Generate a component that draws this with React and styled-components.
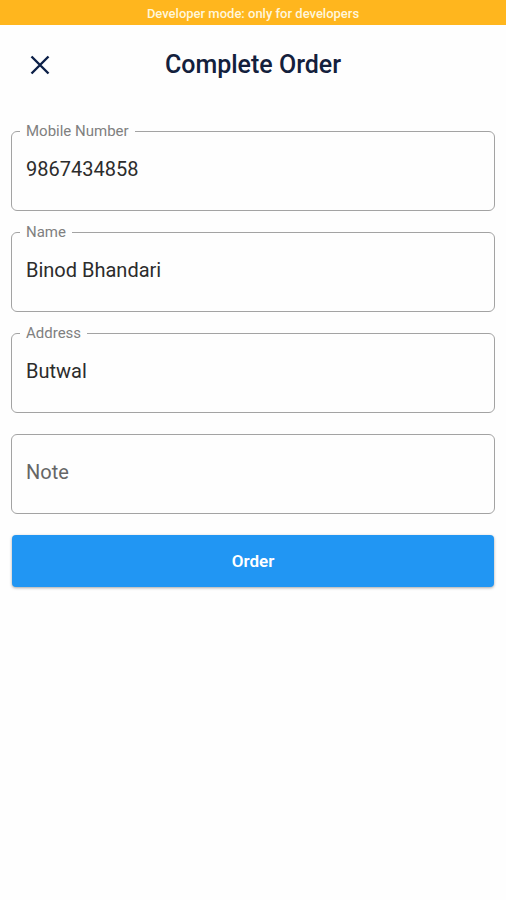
import React, { useState } from "react";
import styled, { createGlobalStyle } from "styled-components";

const GlobalStyle = createGlobalStyle`
  * {
    box-sizing: border-box;
  }

  body {
    margin: 0;
    background-color: #fefefe;
    font-family: Roboto, "Liberation Sans", sans-serif;
  }
`;

const DevBanner = styled.div`
  height: 25px;
  line-height: 27px;
  background-color: #ffb61e;
  color: #fff6dc;
  font-size: 13px;
  font-weight: 500;
  text-align: center;
`;

const Header = styled.header`
  display: grid;
  grid-template-columns: 56px 1fr 56px;
  align-items: center;
  height: 80px;
  padding: 0 12px;
`;

const CloseButton = styled.button`
  display: flex;
  align-items: center;
  justify-content: center;
  height: 56px;
  padding: 0;
  border: none;
  background: none;
  color: #0b1f47;
  cursor: pointer;
`;

const Title = styled.h1`
  margin: 0;
  font-size: 25px;
  line-height: 28px;
  font-weight: 500;
  color: #13203c;
  text-align: center;
`;

const Form = styled.form`
  display: flex;
  flex-direction: column;
  gap: 21px;
  padding: 26px 11px;
`;

const Field = styled.div`
  position: relative;
`;

/* sits on top of the input's border */
const FieldLabel = styled.label`
  position: absolute;
  top: -8px;
  left: 9px;
  padding: 0 6px;
  background-color: #fefefe;
  color: #808080;
  font-size: 15px;
  line-height: 16px;
`;

const FieldInput = styled.input`
  display: block;
  width: 100%;
  height: 80px;
  padding: 0 14px 4px;
  border: 1px solid #a3a3a3;
  border-radius: 6px;
  outline: none;
  background: none;
  color: #2c2c2c;
  font-family: inherit;
  font-size: 20px;

  &::placeholder {
    color: #666;
    opacity: 1;
  }
`;

const OrderButton = styled.button`
  height: 52px;
  margin: 0 1px;
  border: none;
  border-radius: 4px;
  background-color: #2196f3;
  box-shadow: 0 1px 3px rgba(0, 0, 0, 0.35);
  color: #fff;
  font-family: inherit;
  font-size: 17px;
  font-weight: 600;
  cursor: pointer;
`;

const fields = [
  { name: "mobile", label: "Mobile Number", type: "tel" },
  { name: "name", label: "Name", type: "text" },
  { name: "address", label: "Address", type: "text" },
  { name: "note", placeholder: "Note", type: "text" }
];

const App = () => {
  const [values, setValues] = useState({
    mobile: "9867434858",
    name: "Binod Bhandari",
    address: "Butwal",
    note: ""
  });

  const handleChange = event => {
    const { name, value } = event.target;
    setValues(prev => ({ ...prev, [name]: value }));
  };

  const handleSubmit = event => {
    event.preventDefault();
  };

  const renderFields = () => {
    return fields.map(({ name, label, placeholder, type }) => (
      <Field key={name}>
        <FieldInput
          id={name}
          name={name}
          type={type}
          value={values[name]}
          placeholder={placeholder}
          aria-label={label ? undefined : placeholder}
          onChange={handleChange}
        />
        {label && <FieldLabel htmlFor={name}>{label}</FieldLabel>}
      </Field>
    ));
  };

  return (
    <>
      <GlobalStyle />
      <DevBanner>Developer mode: only for developers</DevBanner>
      <Header>
        <CloseButton type="button" aria-label="Close">
          <svg width="20" height="20" viewBox="0 0 20 20" fill="none">
            <path d="M1.5 1.5L18.5 18.5M18.5 1.5L1.5 18.5" stroke="currentColor" strokeWidth="2.4" />
          </svg>
        </CloseButton>
        <Title>Complete Order</Title>
      </Header>
      <Form onSubmit={handleSubmit}>
        {renderFields()}
        <OrderButton type="submit">Order</OrderButton>
      </Form>
    </>
  );
};

export default App;
